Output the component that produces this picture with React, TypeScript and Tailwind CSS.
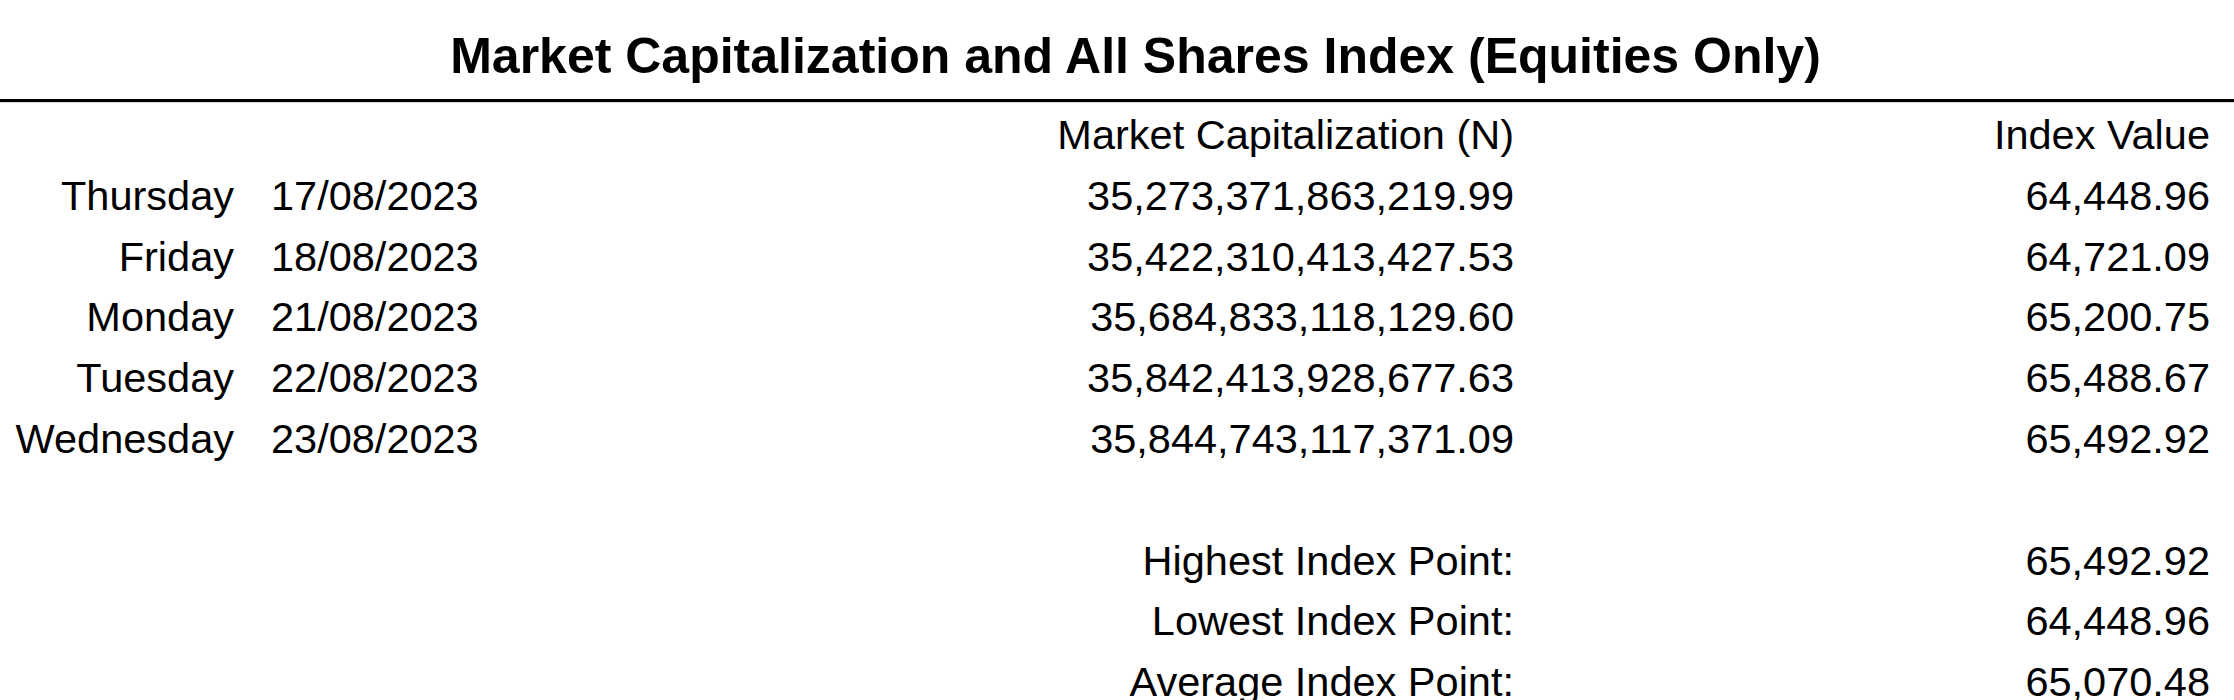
const rows = [
  { day: "Thursday", date: "17/08/2023", cap: "35,273,371,863,219.99", index: "64,448.96" },
  { day: "Friday", date: "18/08/2023", cap: "35,422,310,413,427.53", index: "64,721.09" },
  { day: "Monday", date: "21/08/2023", cap: "35,684,833,118,129.60", index: "65,200.75" },
  { day: "Tuesday", date: "22/08/2023", cap: "35,842,413,928,677.63", index: "65,488.67" },
  { day: "Wednesday", date: "23/08/2023", cap: "35,844,743,117,371.09", index: "65,492.92" },
];

const summary = [
  { label: "Highest Index Point:", value: "65,492.92" },
  { label: "Lowest Index Point:", value: "64,448.96" },
  { label: "Average Index Point:", value: "65,070.48" },
];

export default function App() {
  return (
    <div className="h-[700px] w-[2234px] overflow-hidden bg-white font-['Liberation_Sans',Arial,sans-serif] text-black">
      {/* title */}
      <div className="pl-[37px] pt-[31px] text-center text-[50px] font-bold leading-[50px]">
        Market Capitalization and All Shares Index (Equities Only)
      </div>
      <div className="mt-[18px] h-[3px] bg-black" />
      <div className="h-px bg-gray-300" />

      <div className="mt-[2px] grid grid-cols-[234px_1fr_600px_696px] pr-[24px] text-[41.5px] leading-[60.8px]">
        {/* header */}
        <div />
        <div />
        <div className="text-right">Market Capitalization (N)</div>
        <div className="text-right">Index Value</div>

        {rows.map((r) => (
          <div key={r.date} className="contents">
            <div className="text-right">{r.day}</div>
            <div className="pl-[37px]">{r.date}</div>
            <div className="text-right">{r.cap}</div>
            <div className="text-right">{r.index}</div>
          </div>
        ))}

        <div className="col-span-4 h-[60.8px]" />

        {summary.map((s) => (
          <div key={s.label} className="contents">
            <div />
            <div />
            <div className="text-right">{s.label}</div>
            <div className="text-right">{s.value}</div>
          </div>
        ))}
      </div>
    </div>
  );
}
